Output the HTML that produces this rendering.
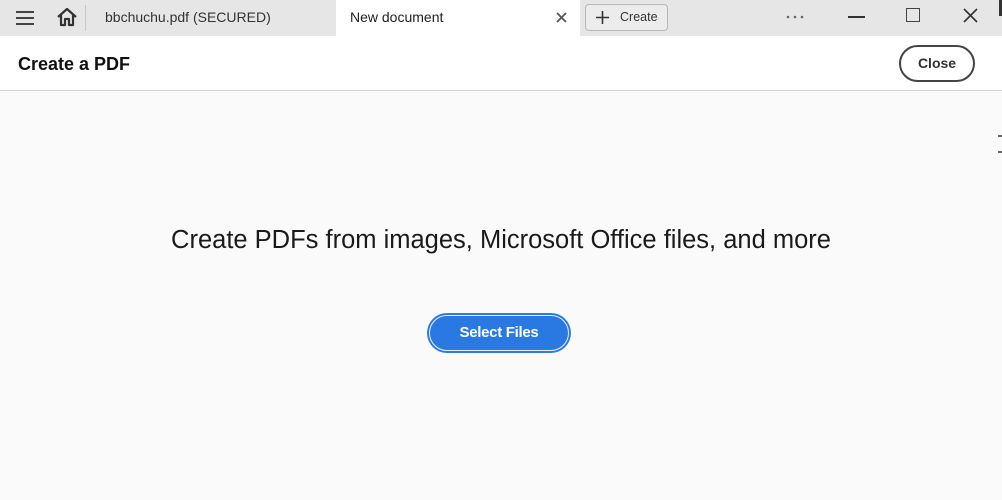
<!DOCTYPE html>
<html><head><style>
*{margin:0;padding:0;box-sizing:border-box}
body{width:1002px;height:500px;overflow:hidden;background:#fafafa;font-family:"Liberation Sans",sans-serif;position:relative;color:#222}
.tabbar{position:absolute;left:0;top:0;width:1002px;height:36px;background:#e6e6e6}
.abs{position:absolute}
.hdr{position:absolute;left:0;top:36px;width:1002px;height:55px;background:#fff;border-bottom:1px solid #d5d5d5}
</style></head><body>
<div class="tabbar">
  <svg class="abs" style="left:16px;top:10px" width="19" height="16"><g stroke="#444" stroke-width="2"><line x1="0" y1="2" x2="18" y2="2"/><line x1="0" y1="8" x2="18" y2="8"/><line x1="0" y1="14" x2="18" y2="14"/></g></svg>
  <svg class="abs" style="left:56px;top:7px" width="22" height="20"><path d="M2 10 L11 2 L20 10 M5 8 V18 H9 V12 H13 V18 H17 V8" fill="none" stroke="#333" stroke-width="2.2" stroke-linejoin="round"/></svg>
  <div class="abs" style="left:85px;top:5px;width:1px;height:26px;background:#c8c8c8"></div>
  <div class="abs" style="left:105px;top:9px;font-size:14px;color:#333">bbchuchu.pdf (SECURED)</div>
  <div class="abs" style="left:336px;top:0;width:244px;height:36px;background:#fff"></div>
  <div class="abs" style="left:350px;top:9px;font-size:14px;color:#222">New document</div>
  <svg class="abs" style="left:556px;top:12px" width="11" height="11"><path d="M1 1L10 10M10 1L1 10" stroke="#555" stroke-width="1.8"/></svg>
  <div class="abs" style="left:585px;top:4px;width:83px;height:27px;border:1px solid #b8b8b8;border-radius:4px;background:#ececec"></div>
  <svg class="abs" style="left:596px;top:11px" width="13" height="13"><path d="M6.5 0V13M0 6.5H13" stroke="#333" stroke-width="1.6"/></svg>
  <div class="abs" style="left:620px;top:10px;font-size:12.5px;color:#333">Create</div>
  <svg class="abs" style="left:786px;top:15px" width="18" height="4"><g fill="#666"><circle cx="2" cy="2" r="1.3"/><circle cx="9" cy="2" r="1.3"/><circle cx="16" cy="2" r="1.3"/></g></svg>
  <div class="abs" style="left:848px;top:16px;width:17px;height:2px;background:#333"></div>
  <div class="abs" style="left:906px;top:8px;width:14px;height:14px;border:1.5px solid #444"></div>
  <svg class="abs" style="left:963px;top:8px" width="15" height="15"><path d="M1 1L14 14M14 1L1 14" stroke="#333" stroke-width="1.6"/></svg>
  <div class="abs" style="left:999px;top:0;width:3px;height:16px;background:#333"></div>
</div>
<div class="hdr">
  <div class="abs" style="left:18px;top:18px;font-size:18px;font-weight:bold;color:#111">Create a PDF</div>
  <div class="abs" style="left:899px;top:9px;width:76px;height:37px;border:2px solid #444;border-radius:19px;font-size:14px;font-weight:bold;color:#333;text-align:center;line-height:33px">Close</div>
</div>
<div class="abs" style="left:0;top:226px;width:1002px;text-align:center;font-size:25.5px;color:#1a1a1a">Create PDFs from images, Microsoft Office files, and more</div>
<div class="abs" style="left:427px;top:313px;width:144px;height:40px;border-radius:20px;background:#2d7be0;padding:2px">
  <div style="width:100%;height:100%;border-radius:18px;border:1.5px solid #e8f0fc;background:#2a78e2;color:#fff;font-size:15px;font-weight:bold;text-align:center;line-height:33px;letter-spacing:-0.3px">Select Files</div>
</div>
<div class="abs" style="left:998px;top:135px;width:4px;height:18px;border-top:2px solid #666;border-bottom:2px solid #666"></div>
</body></html>
